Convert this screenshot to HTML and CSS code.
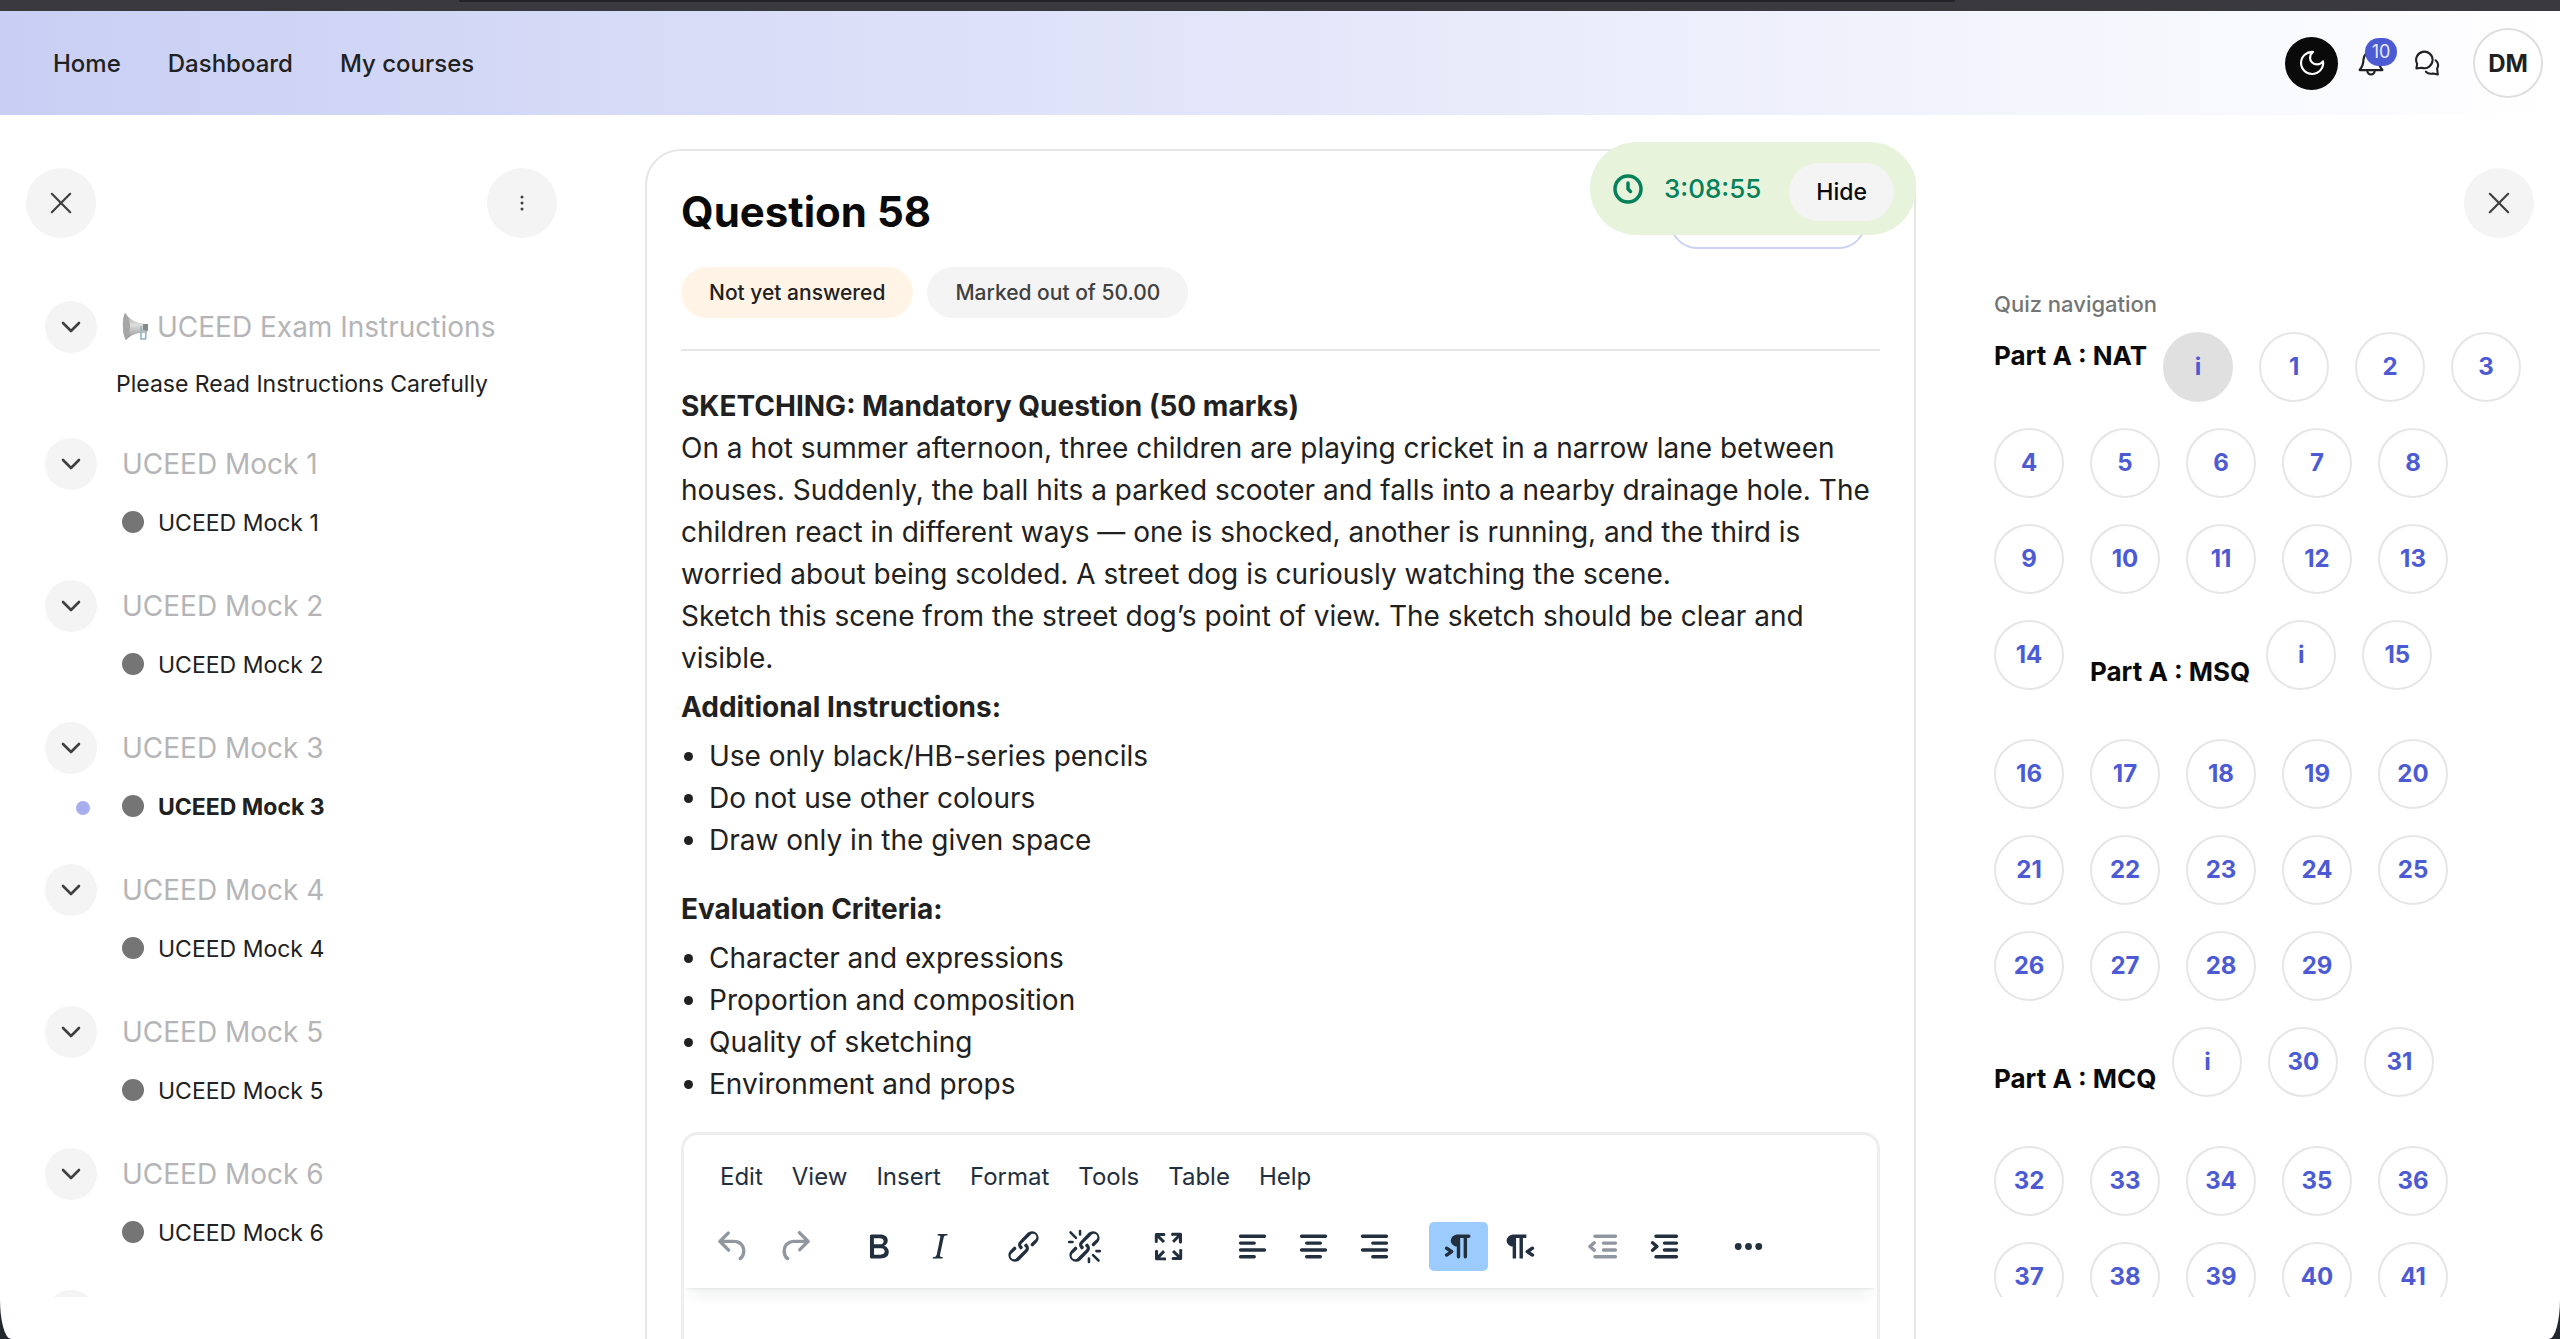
FILE: index.html
```html
<!DOCTYPE html>
<html lang="en">
<head>
    <meta charset="UTF-8">
    <meta name="viewport" content="width=device-width, initial-scale=1.0">
    <title>UCEED Mock 3</title>
    <link rel="stylesheet" href="styles.css">
</head>
<body>
    <!-- Shared icon shapes -->
    <svg class="icon-defs" aria-hidden="true">
        <symbol id="icon-close" viewBox="0 0 24 24"><path d="M2 2l20 20M22 2L2 22" fill="none" stroke="currentColor" stroke-width="2.4" stroke-linecap="round"/></symbol>
        <symbol id="icon-chevron" viewBox="0 0 20 20"><path d="M2 6l8 8 8-8" fill="none" stroke="currentColor" stroke-width="2.6" stroke-linecap="round" stroke-linejoin="round"/></symbol>
    </svg>

    <div class="app">
        <div class="window-edge"></div>

        <header class="navbar">
            <nav class="main-nav">
                <a href="#">Home</a>
                <a href="#">Dashboard</a>
                <a href="#">My courses</a>
            </nav>
            <div class="user-nav">
                <button class="theme-toggle" aria-label="Dark mode">
                    <svg viewBox="0 0 24 24" width="26" height="26"><path d="M13 1.800A10.200 10.200 0 1 0 22.200 10.500c-1.500 2-3.400 2.800-5.400 2.800-3.800 0-6.600-2.800-6.600-6 0-2.200 1-4.200 2.800-5.500z" fill="none" stroke="currentColor" stroke-width="2" stroke-linejoin="round"/></svg>
                </button>
                <button class="icon-button notifications" aria-label="Notifications">
                    <svg viewBox="0 0 24 24" width="26" height="26" fill="none" stroke="currentColor" stroke-width="2" stroke-linecap="round" stroke-linejoin="round"><path d="M12 2a7 7 0 0 0-7 7c0 4-1 6.500-3.500 9.500h21C20 15.500 19 13 19 9a7 7 0 0 0-7-7z"/><path d="M8.500 19c.3 2 1.700 3.500 3.500 3.500s3.200-1.500 3.500-3.500"/></svg>
                    <span class="badge">10</span>
                </button>
                <button class="icon-button" aria-label="Messages">
                    <svg viewBox="0 0 24 24" width="26" height="26" fill="none" stroke="currentColor" stroke-width="1.900" stroke-linecap="round" stroke-linejoin="round"><path d="M2.200 17l.7-4.200A7.600 7.600 0 1 1 7 16.300z"/><path d="M20 9.500c2.300 2 2.800 5 1.300 7.500l.7 5.500-4.600-.9c-2.200.6-4.600.2-6.400-1.600"/></svg>
                </button>
                <button class="avatar">DM</button>
            </div>
        </header>

        <div class="layout">
            <aside class="course-index">
                <div class="drawer-header">
                    <button class="round-button" aria-label="Close course index"><svg width="22" height="22"><use href="#icon-close"/></svg></button>
                    <button class="round-button" aria-label="Options">
                        <svg viewBox="0 0 4 18" width="4" height="18" fill="currentColor"><circle cx="2" cy="3" r="1.500"/><circle cx="2" cy="9" r="1.500"/><circle cx="2" cy="15" r="1.500"/></svg>
                    </button>
                </div>
                <div class="section">
                    <div class="section-header">
                        <button class="toggle" aria-label="Collapse"><svg width="20" height="20"><use href="#icon-chevron"/></svg></button>
                        <a href="#">
                            <svg class="megaphone" viewBox="0 0 26 28" width="26" height="28">
                                <defs>
                                    <linearGradient id="horn" x1="0" y1="0" x2="0" y2="1">
                                        <stop offset="0" stop-color="#9a9a9a"/>
                                        <stop offset="0.45" stop-color="#dedede"/>
                                        <stop offset="1" stop-color="#8a8a8a"/>
                                    </linearGradient>
                                </defs>
                                <path d="M3 0c4 6 10 10 21 11v9c-9-1-15 2-20 7C0 21 0 6 3 0z" fill="url(#horn)"/>
                                <path d="M3 0c3 3 5 8 5 13S7 24 4 27C0 21 0 6 3 0z" fill="#a6a6a6"/>
                                <path d="M19 13v13h4.500l1-13" fill="none" stroke="#8fb3c4" stroke-width="1.600"/>
                                <path d="M21 11h5v7l-5-1z" fill="#84898c"/>
                            </svg>
                            UCEED Exam Instructions
                        </a>
                    </div>
                    <a class="item item-plain" href="#">Please Read Instructions Carefully</a>
                </div>
                <div class="section">
                    <div class="section-header">
                        <button class="toggle" aria-label="Collapse"><svg width="20" height="20"><use href="#icon-chevron"/></svg></button>
                        <a href="#">UCEED Mock 1</a>
                    </div>
                    <a class="item" href="#"><span class="status"></span>UCEED Mock 1</a>
                </div>
                <div class="section">
                    <div class="section-header">
                        <button class="toggle" aria-label="Collapse"><svg width="20" height="20"><use href="#icon-chevron"/></svg></button>
                        <a href="#">UCEED Mock 2</a>
                    </div>
                    <a class="item" href="#"><span class="status"></span>UCEED Mock 2</a>
                </div>
                <div class="section">
                    <div class="section-header">
                        <button class="toggle" aria-label="Collapse"><svg width="20" height="20"><use href="#icon-chevron"/></svg></button>
                        <a href="#">UCEED Mock 3</a>
                    </div>
                    <a class="item item-current" href="#"><span class="status"></span>UCEED Mock 3</a>
                </div>
                <div class="section">
                    <div class="section-header">
                        <button class="toggle" aria-label="Collapse"><svg width="20" height="20"><use href="#icon-chevron"/></svg></button>
                        <a href="#">UCEED Mock 4</a>
                    </div>
                    <a class="item" href="#"><span class="status"></span>UCEED Mock 4</a>
                </div>
                <div class="section">
                    <div class="section-header">
                        <button class="toggle" aria-label="Collapse"><svg width="20" height="20"><use href="#icon-chevron"/></svg></button>
                        <a href="#">UCEED Mock 5</a>
                    </div>
                    <a class="item" href="#"><span class="status"></span>UCEED Mock 5</a>
                </div>
                <div class="section">
                    <div class="section-header">
                        <button class="toggle" aria-label="Collapse"><svg width="20" height="20"><use href="#icon-chevron"/></svg></button>
                        <a href="#">UCEED Mock 6</a>
                    </div>
                    <a class="item" href="#"><span class="status"></span>UCEED Mock 6</a>
                </div>
                <div class="section">
                    <div class="section-header">
                        <button class="toggle" aria-label="Collapse"></button>
                    </div>
                </div>
            </aside>

            <main class="content">
                <div class="timer">
                    <svg viewBox="0 0 30 30" width="30" height="30" fill="none" stroke="currentColor" stroke-width="3.500" stroke-linecap="round" stroke-linejoin="round"><circle cx="15" cy="15" r="13"/><path d="M15 9v6l2.500 2.500"/></svg>
                    <span class="time">3:08:55</span>
                    <button class="hide-button">Hide</button>
                </div>

                <article class="question">
                    <div class="question-info">
                        <div class="question-title">
                            <h1>Question 58</h1>
                            <button class="flag-button" aria-label="Flag question"></button>
                        </div>
                        <div class="pills">
                            <span class="pill pill-state">Not yet answered</span>
                            <span class="pill">Marked out of 50.00</span>
                        </div>
                    </div>

                    <div class="question-text">
                        <p><strong>SKETCHING: Mandatory Question (50 marks)</strong><br>
                        On a hot summer afternoon, three children are playing cricket in a narrow lane between houses. Suddenly, the ball hits a parked scooter and falls into a nearby drainage hole. The children react in different ways — one is shocked, another is running, and the third is worried about being scolded. A street dog is curiously watching the scene.<br>
                        Sketch this scene from the street dog’s point of view. The sketch should be clear and visible.</p>
                        <p><strong>Additional Instructions:</strong></p>
                        <ul>
                            <li>Use only black/HB-series pencils</li>
                            <li>Do not use other colours</li>
                            <li>Draw only in the given space</li>
                        </ul>
                        <p><strong>Evaluation Criteria:</strong></p>
                        <ul>
                            <li>Character and expressions</li>
                            <li>Proportion and composition</li>
                            <li>Quality of sketching</li>
                            <li>Environment and props</li>
                        </ul>
                    </div>

                    <div class="editor">
                        <div class="editor-header">
                            <div class="menubar">
                                <button>Edit</button>
                                <button>View</button>
                                <button>Insert</button>
                                <button>Format</button>
                                <button>Tools</button>
                                <button>Table</button>
                                <button>Help</button>
                            </div>
                            <div class="toolbar">
                                <div class="tool-group">
                                    <button disabled aria-label="Undo"><svg viewBox="0 0 24 24"><path d="M6.400 8H12c3.700 0 6.200 2 6.800 5.100.6 2.700-.4 5.600-2.300 6.800a1 1 0 0 1-1-1.800c1.100-.6 1.800-2.700 1.400-4.600-.5-2.100-2.100-3.500-4.900-3.500H6.400l3.300 3.300a1 1 0 1 1-1.400 1.400l-5-5a1 1 0 0 1 0-1.400l5-5a1 1 0 0 1 1.400 1.400L6.400 8z"/></svg></button>
                                    <button disabled aria-label="Redo"><svg viewBox="0 0 24 24"><path d="M17.600 10H12c-2.800 0-4.400 1.400-4.900 3.500-.4 2 .3 4 1.400 4.600a1 1 0 1 1-1 1.800c-2-1.200-2.900-4.100-2.300-6.800.6-3 3-5.100 6.800-5.100h5.600l-3.300-3.300a1 1 0 1 1 1.400-1.400l5 5a1 1 0 0 1 0 1.400l-5 5a1 1 0 0 1-1.400-1.400l3.300-3.300z"/></svg></button>
                                </div>
                                <div class="tool-group">
                                    <button aria-label="Bold"><svg viewBox="0 0 24 24"><path fill-rule="evenodd" d="M7.800 19c-.3 0-.5 0-.6-.2l-.2-.5V5.700c0-.2 0-.4.2-.5l.6-.2h5c1.500 0 2.700.3 3.500 1 .7.6 1.100 1.400 1.100 2.500a3 3 0 0 1-.6 1.900c-.4.6-1 1-1.600 1.200.4.1.9.3 1.300.6s.8.7 1 1.200c.4.4.5 1 .5 1.600 0 1.300-.4 2.300-1.300 3-.8.7-2.100 1-3.800 1H7.800zm5-8.300c.6 0 1.200-.1 1.600-.5.4-.3.6-.7.6-1.300 0-1.100-.8-1.700-2.300-1.700H9.300v3.500h3.400zm.5 6c.7 0 1.300-.1 1.700-.4.4-.4.6-.9.6-1.500s-.2-1-.7-1.400c-.4-.3-1-.4-2-.4H9.400v3.800h4z"/></svg></button>
                                    <button aria-label="Italic"><svg viewBox="0 0 24 24"><path d="M16.700 4.700l-.1.9h-.3c-.6 0-1 0-1.400.3-.3.3-.4.6-.5 1.100l-2.100 9.800v.6c0 .5.4.8 1.400.8h.2l-.2.8H8l.2-.8h.2c1.100 0 1.800-.5 2-1.500l2-9.800.1-.5c0-.6-.4-.8-1.400-.8h-.3l.2-.9h5.700z"/></svg></button>
                                </div>
                                <div class="tool-group">
                                    <button aria-label="Link"><svg viewBox="0 0 24 24"><path d="M6.200 12.300a1 1 0 0 1 1.400 1.400l-2 2a2 2 0 1 0 2.600 2.800l4.800-4.800a1 1 0 0 0 0-1.400 1 1 0 1 1 1.400-1.300 2.900 2.900 0 0 1 0 4L9.600 20a3.900 3.900 0 0 1-5.500-5.500l2-2zm11.600-.6a1 1 0 0 1-1.400-1.400l2-2a2 2 0 1 0-2.600-2.800L11 10.300a1 1 0 0 0 0 1.400A1 1 0 1 1 9.600 13a2.900 2.900 0 0 1 0-4L14.400 4a3.900 3.900 0 0 1 5.500 5.500l-2 2z"/></svg></button>
                                    <button aria-label="Unlink"><svg viewBox="0 0 24 24"><path d="M6.200 12.300a1 1 0 0 1 1.400 1.400l-2 2a2 2 0 1 0 2.600 2.800l4.800-4.800a1 1 0 0 0 0-1.400 1 1 0 1 1 1.400-1.300 2.900 2.900 0 0 1 0 4L9.600 20a3.900 3.900 0 0 1-5.500-5.500l2-2zm11.600-.6a1 1 0 0 1-1.400-1.400l2-2a2 2 0 1 0-2.600-2.800L11 10.300a1 1 0 0 0 0 1.400A1 1 0 1 1 9.600 13a2.900 2.900 0 0 1 0-4L14.400 4a3.900 3.900 0 0 1 5.500 5.500l-2 2z"/><path d="M3.800 3.700L7 6.900M3 9.400h2M9.400 3v2M17 17l3.200 3.200M14.600 19v2M19 14.700h2" fill="none" stroke="currentColor" stroke-width="1.500" stroke-linecap="round"/></svg></button>
                                </div>
                                <div class="tool-group">
                                    <button aria-label="Fullscreen"><svg viewBox="0 0 24 24"><path d="M15.300 10l-1.200-1.300 2.900-3h-2.300a.9.9 0 1 1 0-1.700H19c.5 0 .9.4.9.9v4.400a.9.9 0 1 1-1.800 0V7l-2.900 3zm0 4l3 3v-2.300a.9.9 0 1 1 1.700 0V19c0 .5-.4.9-.9.9h-4.400a.9.9 0 1 1 0-1.800H17l-3-2.900 1.300-1.200zM10 15.400l-2.900 3h2.300a.9.9 0 1 1 0 1.700H5a.9.9 0 0 1-.9-.9v-4.400a.9.9 0 1 1 1.800 0V17l2.900-3 1.200 1.300zM8.700 10L5.700 7v2.300a.9.9 0 0 1-1.700 0V5c0-.5.4-.9.9-.9h4.400a.9.9 0 0 1 0 1.800H7l3 2.900-1.300 1.200z"/></svg></button>
                                </div>
                                <div class="tool-group">
                                    <button aria-label="Align left"><svg class="lines" viewBox="0 0 24 24"><path d="M5 6h14M5 10h8M5 14h14M5 18h8"/></svg></button>
                                    <button aria-label="Align center"><svg class="lines" viewBox="0 0 24 24"><path d="M5 6h14M8 10h8M5 14h14M8 18h8"/></svg></button>
                                    <button aria-label="Align right"><svg class="lines" viewBox="0 0 24 24"><path d="M5 6h14M11 10h8M5 14h14M11 18h8"/></svg></button>
                                </div>
                                <div class="tool-group">
                                    <button class="active" aria-label="Left to right"><svg viewBox="0 0 24 24"><path d="M11 5h7a1 1 0 0 1 0 2h-1v11a1 1 0 0 1-2 0V7h-2v11a1 1 0 0 1-2 0v-6c-.5 0-1 0-1.400-.3A3.400 3.400 0 0 1 7.800 10a3.300 3.300 0 0 1 0-2.800 3.400 3.400 0 0 1 1.800-1.800L11 5zM4.400 16.200L6.200 15l-1.800-1.200a1 1 0 0 1 1.200-1.600l3 2a1 1 0 0 1 0 1.600l-3 2a1 1 0 1 1-1.200-1.600z"/></svg></button>
                                    <button aria-label="Right to left"><svg viewBox="0 0 24 24"><path d="M8 5h8v2h-2v12h-2V7h-2v12H8v-7c-.5 0-1 0-1.400-.3A3.400 3.400 0 0 1 4.800 10a3.300 3.300 0 0 1 0-2.800 3.400 3.400 0 0 1 1.800-1.800L8 5zm12.200 11.200a1 1 0 1 1-1.200 1.600l-3-2a1 1 0 0 1 0-1.600l3-2a1 1 0 1 1 1.200 1.600L18.400 15l1.800 1.200z"/></svg></button>
                                </div>
                                <div class="tool-group">
                                    <button disabled aria-label="Outdent"><svg class="lines" viewBox="0 0 24 24"><path d="M7 6h12M12 10h7M12 14h7M7 18h12M6.600 9.800L4 12l2.600 2.200"/></svg></button>
                                    <button aria-label="Indent"><svg class="lines" viewBox="0 0 24 24"><path d="M7 6h12M12 10h7M12 14h7M7 18h12M5 9.800L7.600 12 5 14.200"/></svg></button>
                                </div>
                                <div class="tool-group">
                                    <button aria-label="More"><svg viewBox="0 0 24 24"><circle cx="6" cy="12" r="2"/><circle cx="12" cy="12" r="2"/><circle cx="18" cy="12" r="2"/></svg></button>
                                </div>
                            </div>
                        </div>
                        <textarea class="editor-body" aria-label="Answer text"></textarea>
                    </div>
                </article>
            </main>

            <aside class="quiz-drawer">
                <div class="drawer-header">
                    <button class="round-button" aria-label="Close quiz navigation"><svg width="22" height="22"><use href="#icon-close"/></svg></button>
                </div>
                <div class="quiz-nav">
                    <h2>Quiz navigation</h2>
                    <div class="quiz-row">
                        <h3>Part A : NAT</h3>
                        <a class="current" href="#">i</a><a href="#">1</a><a href="#">2</a><a href="#">3</a>
                    </div>
                    <div class="quiz-row"><a href="#">4</a><a href="#">5</a><a href="#">6</a><a href="#">7</a><a href="#">8</a></div>
                    <div class="quiz-row"><a href="#">9</a><a href="#">10</a><a href="#">11</a><a href="#">12</a><a href="#">13</a></div>
                    <div class="quiz-row">
                        <a href="#">14</a>
                        <h3>Part A : MSQ</h3>
                        <a href="#">i</a><a href="#">15</a>
                    </div>
                    <div class="quiz-row"><a href="#">16</a><a href="#">17</a><a href="#">18</a><a href="#">19</a><a href="#">20</a></div>
                    <div class="quiz-row"><a href="#">21</a><a href="#">22</a><a href="#">23</a><a href="#">24</a><a href="#">25</a></div>
                    <div class="quiz-row"><a href="#">26</a><a href="#">27</a><a href="#">28</a><a href="#">29</a></div>
                    <div class="quiz-row">
                        <h3>Part A : MCQ</h3>
                        <a href="#">i</a><a href="#">30</a><a href="#">31</a>
                    </div>
                    <div class="quiz-row"><a href="#">32</a><a href="#">33</a><a href="#">34</a><a href="#">35</a><a href="#">36</a></div>
                    <div class="quiz-row"><a href="#">37</a><a href="#">38</a><a href="#">39</a><a href="#">40</a><a href="#">41</a></div>
                </div>
            </aside>
        </div>
    </div>
</body>
</html>
```

FILE: styles.css
```css
:root {
    --primary: #4c5bd4;
    --text: #212121;
    --heading: #0a0a0a;
    --muted: #b5b5b7;
    --surface: #f4f4f4;
    --border: #e6e6e6;
    --editor: #222f3e;
}

* {
    box-sizing: border-box;
    margin: 0;
    padding: 0;
}

body {
    background-color: #23282e;
    color: var(--text);
    font-family: Inter, Arial, sans-serif;
    font-size: 24px;
    overflow: hidden;
}

a {
    color: inherit;
    text-decoration: none;
}

button {
    border: none;
    background: none;
    color: inherit;
    font: inherit;
    cursor: pointer;
}

.icon-defs {
    position: absolute;
    width: 0;
    height: 0;
}

.app {
    display: flex;
    flex-direction: column;
    height: 100vh;
    background-color: #fff;
    border-radius: 0 0 11px 11px / 0 0 40px 40px;
    overflow: hidden;
}

/* Dark strip above the page */
.window-edge {
    flex: none;
    height: 11px;
    padding: 0 605px 0 459px;
    background-color: #3a393e;
}

.window-edge::before {
    content: "";
    display: block;
    height: 2px;
    background-color: #232227;
    border-radius: 0 0 4px 4px;
}

/* Navbar */
.navbar {
    flex: none;
    display: flex;
    align-items: center;
    justify-content: space-between;
    height: 104px;
    padding: 0 17px 0 53px;
    background-image: linear-gradient(to right, #c9cff4, #fff);
}

.main-nav {
    display: flex;
    gap: 47px;
    font-weight: 500;
}

.user-nav {
    display: flex;
    align-items: center;
}

.theme-toggle {
    display: grid;
    place-items: center;
    width: 53px;
    height: 53px;
    margin-right: 20px;
    border-radius: 50%;
    background-color: var(--heading);
    color: #fff;
}

.icon-button {
    position: relative;
    display: grid;
    place-items: center;
    width: 26px;
    height: 26px;
    margin-right: 33px;
}

.notifications {
    margin-right: 30px;
}

.badge {
    position: absolute;
    top: -12px;
    left: 7px;
    width: 32px;
    border-radius: 14px;
    background-color: var(--primary);
    color: #e8eafb;
    font-size: 18px;
    line-height: 28px;
    text-align: center;
}

.avatar {
    width: 70px;
    height: 70px;
    border: 2px solid #dfdfe1;
    border-radius: 50%;
    background-color: #fff;
    font-weight: 700;
}

/* Page columns */
.layout {
    flex: 1;
    min-height: 0;
    display: grid;
    grid-template-columns: 645px minmax(0, 1fr) 644px;
    grid-template-rows: minmax(0, 1fr);
}

.course-index,
.quiz-drawer {
    margin-bottom: 42px;
    overflow: hidden;
}

.drawer-header {
    display: flex;
    justify-content: space-between;
    padding: 53px 88px 0 26px;
}

.quiz-drawer .drawer-header {
    justify-content: flex-end;
    padding-right: 26px;
}

.round-button {
    display: grid;
    place-items: center;
    width: 70px;
    height: 70px;
    border-radius: 50%;
    background-color: var(--surface);
    color: #404040;
}

/* Course index */
.course-index .drawer-header {
    margin-bottom: 63px;
}

.section {
    padding-left: 45px;
    margin-bottom: 38px;
}

.section-header {
    display: flex;
    align-items: center;
    gap: 25px;
    margin-bottom: 15px;
    color: var(--muted);
    font-size: 28px;
}

.section-header a {
    display: flex;
    align-items: center;
    gap: 9px;
}

.toggle {
    display: grid;
    place-items: center;
    width: 52px;
    height: 52px;
    border-radius: 50%;
    background-color: var(--surface);
    color: #404040;
}

.item {
    position: relative;
    display: flex;
    align-items: center;
    gap: 14px;
    padding-left: 77px;
    font-size: 23px;
    line-height: 37px;
}

.item-plain {
    padding-left: 71px;
    line-height: 32px;
}

.status {
    width: 22px;
    height: 22px;
    margin-bottom: 3px;
    border-radius: 50%;
    background-color: #757575;
}

.item-current {
    font-weight: 700;
}

.item-current::before {
    content: "";
    position: absolute;
    left: 31px;
    width: 14px;
    height: 14px;
    border-radius: 50%;
    background-color: #a8aeee;
}

/* Question */
.content {
    position: relative;
    padding-top: 34px;
}

.timer {
    position: absolute;
    top: 27px;
    right: 0;
    z-index: 1;
    display: flex;
    align-items: center;
    height: 93px;
    padding: 0 22px 0 23px;
    border-radius: 47px;
    background-color: #e8f3dc;
    color: #04805a;
}

.time {
    margin: 0 28px 0 21px;
    font-size: 26px;
    font-weight: 500;
}

.hide-button {
    height: 58px;
    margin-top: 6px;
    padding: 0 27px;
    border-radius: 29px;
    background-color: var(--surface);
    color: var(--heading);
    font-size: 23px;
    font-weight: 500;
}

.question {
    padding: 34px;
    border: 2px solid var(--border);
    border-radius: 36px;
}

.question-info {
    padding-bottom: 31px;
    margin-bottom: 34px;
    border-bottom: 2px solid var(--border);
}

.question-title {
    display: flex;
    align-items: flex-end;
    justify-content: space-between;
    margin-bottom: 28px;
    padding-right: 14px;
}

.question-title h1 {
    color: var(--heading);
    font-size: 42px;
    line-height: 54px;
}

.flag-button {
    width: 196px;
    height: 54px;
    margin-bottom: -10px;
    border: 2px solid #cdd1f6;
    border-radius: 27px;
}

.pills {
    display: flex;
    gap: 14px;
}

.pill {
    padding: 0 28px;
    border-radius: 26px;
    background-color: var(--surface);
    color: #404040;
    font-size: 21px;
    font-weight: 500;
    line-height: 51px;
}

.pill-state {
    background-color: #fff4e6;
    color: var(--text);
}

.question-text {
    font-size: 28px;
    line-height: 42px;
}

.question-text p {
    margin-bottom: 7px;
}

.question-text ul {
    padding-left: 28px;
    margin-bottom: 27px;
}

/* Editor */
.editor {
    border: 3px solid #eee;
    border-radius: 17px;
    color: var(--editor);
    overflow: hidden;
}

.editor-header {
    padding: 17px 20px;
    box-shadow: 0 3px 3px -3px rgba(34, 47, 62, 0.15), 0 14px 14px -7px rgba(34, 47, 62, 0.07);
}

.menubar {
    display: flex;
    gap: 1px;
    margin-bottom: 22px;
    padding-left: 2px;
}

.menubar button {
    height: 48px;
    padding: 0 14px;
}

.toolbar {
    display: flex;
    gap: 25px;
}

.tool-group {
    display: flex;
    gap: 2px;
}

.tool-group button {
    display: grid;
    place-items: center;
    width: 59px;
    height: 49px;
    border-radius: 5px;
}

.tool-group button:disabled {
    color: #9197a0;
}

.tool-group .active {
    background-color: #9bccfd;
}

.tool-group svg {
    width: 41px;
    height: 41px;
    fill: currentColor;
}

.tool-group .lines {
    fill: none;
    stroke: currentColor;
    stroke-width: 2;
    stroke-linecap: round;
    stroke-linejoin: round;
}

.editor-body {
    display: block;
    width: 100%;
    height: 400px;
    padding: 20px;
    border: none;
    outline: none;
    resize: none;
    background: none;
    font: inherit;
}

/* Quiz navigation */
.quiz-nav {
    display: flex;
    flex-direction: column;
    gap: 26px;
    padding: 50px 0 0 78px;
}

.quiz-nav h2 {
    margin-bottom: -14px;
    color: #757575;
    font-size: 22px;
    font-weight: 500;
    line-height: 32px;
}

.quiz-row {
    display: flex;
    align-items: flex-start;
    gap: 26px;
}

.quiz-row h3 {
    margin: 35px -10px 25px 0;
    color: var(--heading);
    font-size: 26px;
    line-height: 33px;
}

.quiz-nav h2 + .quiz-row h3 {
    margin-top: 7px;
    margin-bottom: 0;
}

.quiz-row a {
    width: 70px;
    border: 2px solid var(--border);
    border-radius: 50%;
    color: var(--primary);
    font-weight: 700;
    line-height: 66px;
    text-align: center;
}

.quiz-row .current {
    border-color: #e0e0e0;
    background-color: #e0e0e0;
}
```
